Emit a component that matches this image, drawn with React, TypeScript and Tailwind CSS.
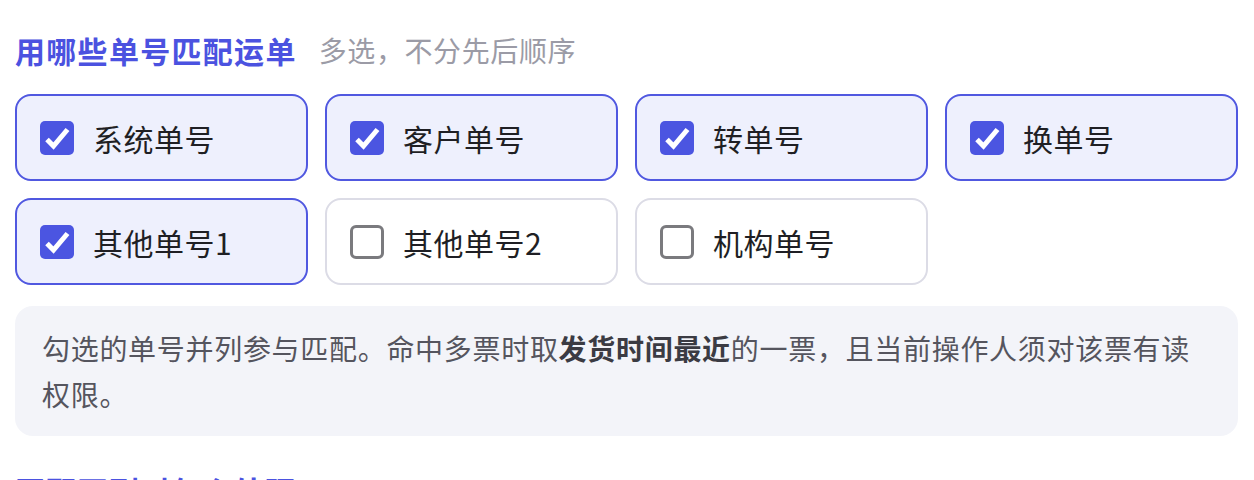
import React, { useState } from "react";

const FONT = '"Noto Sans CJK SC", "Noto Sans", sans-serif';

type Option = { key: string; label: string };

const OPTIONS: Option[] = [
  { key: "system", label: "系统单号" },
  { key: "customer", label: "客户单号" },
  { key: "transfer", label: "转单号" },
  { key: "swap", label: "换单号" },
  { key: "other1", label: "其他单号1" },
  { key: "other2", label: "其他单号2" },
  { key: "org", label: "机构单号" },
];

const CheckBox: React.FC<{ checked: boolean }> = ({ checked }) =>
  checked ? (
    <span className="flex h-[34px] w-[34px] shrink-0 items-center justify-center rounded-[5px] bg-[#4b55e1]">
      <svg width="34" height="34" viewBox="0 0 34 34" fill="none">
        <path
          d="M7 18.5 L13.5 25 L27.5 8.5"
          stroke="#fff"
          strokeWidth="5"
          strokeLinecap="butt"
          strokeLinejoin="miter"
        />
      </svg>
    </span>
  ) : (
    <span className="h-[34px] w-[34px] shrink-0 rounded-[6px] border-[3px] border-[#7a7a7e] bg-white" />
  );

const App: React.FC = () => {
  const [selected, setSelected] = useState<string[]>([
    "system",
    "customer",
    "transfer",
    "swap",
    "other1",
  ]);

  const toggle = (key: string) =>
    setSelected((s) => (s.includes(key) ? s.filter((k) => k !== key) : [...s, key]));

  return (
    <div className="min-h-screen bg-white pl-[15px] pr-[16px] pt-[30px]" style={{ fontFamily: FONT }}>
      <div className="mb-[24px] flex h-[40px] items-center gap-[22px]">
        <h2 className="text-[30px] font-bold leading-[40px] tracking-[1.3px] text-[#4b52e0]">用哪些单号匹配运单</h2>
        <span className="text-[28px] leading-[40px] tracking-[0.6px] text-[#9b9ba6]">多选，不分先后顺序</span>
      </div>

      <div className="grid grid-cols-4 gap-[17px]">
        {OPTIONS.map((o) => {
          const on = selected.includes(o.key);
          return (
            <button
              key={o.key}
              onClick={() => toggle(o.key)}
              className={`flex h-[87px] items-center gap-[19px] rounded-[16px] border-2 pl-[23px] text-left ${
                on ? "border-[#5058e0] bg-[#eef0fd]" : "border-[#dcdce6] bg-white"
              }`}
            >
              <CheckBox checked={on} />
              <span className="text-[30px] leading-none tracking-[0.5px] text-[#1f1f24]">{o.label}</span>
            </button>
          );
        })}
      </div>

      <div className="mt-[21px] rounded-[18px] bg-[#f3f4f9] py-[19px] pl-[27px] pr-[24px] text-[28px] leading-[46px] tracking-[0.7px] text-[#55555e]">
        勾选的单号并列参与匹配。命中多票时取
        <b className="font-bold text-[#3b3b43]">发货时间最近</b>
        的一票，且当前操作人须对该票有读权限。
      </div>

      <div className="mt-[34px] flex h-[40px] items-center">
        <h2 className="text-[30px] font-bold leading-[40px] tracking-[1.3px] text-[#4b52e0]">匹配不到时怎么处理</h2>
      </div>
    </div>
  );
};

export default App;
